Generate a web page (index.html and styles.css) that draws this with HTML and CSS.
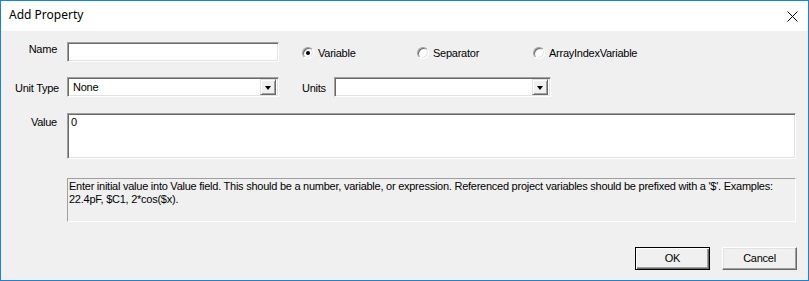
FILE: index.html
```html
<!DOCTYPE html>
<html>
<head>
<meta charset="utf-8">
<link rel="stylesheet" href="styles.css">
</head>
<body>
<div class="window">
  <div class="titlebar">
    <span class="title">Add Property</span>
    <svg class="close" width="11" height="11" viewBox="0 0 11 11"><path d="M0.5 0.5 L10.5 10.5 M10.5 0.5 L0.5 10.5" stroke="#000" stroke-width="1" fill="none"/></svg>
  </div>
  <div class="content">
    <div class="row row-name">
      <span class="lbl">Name</span>
      <div class="sunken field-name"></div>
      <div class="radios">
        <div class="radio-item"><span class="radio checked"><span class="dot"></span></span><span class="rtext">Variable</span></div>
        <div class="radio-item"><span class="radio"></span><span class="rtext">Separator</span></div>
        <div class="radio-item"><span class="radio"></span><span class="rtext">ArrayIndexVariable</span></div>
      </div>
    </div>
    <div class="row row-unit">
      <span class="lbl lbl-unit">Unit Type</span>
      <div class="sunken select select-unit"><span class="sel-text">None</span><span class="drop"><span class="tri"></span></span></div>
      <span class="lbl-units">Units</span>
      <div class="sunken select select-units"><span class="sel-text"></span><span class="drop"><span class="tri"></span></span></div>
    </div>
    <div class="row row-value">
      <span class="lbl lbl-value">Value</span>
      <div class="sunken textarea">0</div>
    </div>
    <div class="info">Enter initial value into Value field. This should be a number, variable, or expression. Referenced project variables should be prefixed with a '$'. Examples: 22.4pF, $C1, 2*cos($x).</div>
    <div class="buttons">
      <div class="btn btn-default"><span>OK</span></div>
      <div class="btn"><span>Cancel</span></div>
    </div>
  </div>
</div>
</body>
</html>
```
FILE: styles.css
```css
* { box-sizing: border-box; }
html, body { margin: 0; padding: 0; }
body {
  font-family: "Liberation Sans", Arial, sans-serif;
  font-size: 11px;
  line-height: 13px;
  letter-spacing: -0.25px;
  color: #000;
  background: #f0f0f0;
}
.window {
  width: 809px;
  height: 281px;
  border: 1px solid #1883d7;
  background: #f0f0f0;
  display: flex;
  flex-direction: column;
}
.titlebar {
  height: 30px;
  background: #fff;
  display: flex;
  align-items: center;
  justify-content: space-between;
  padding: 0 10px 2px 8px;
}
.title {
  font-family: "Noto Sans", "Open Sans", sans-serif;
  font-size: 12px;
  line-height: 16px;
  letter-spacing: 0;
  color: #000;
}
.close { display: block; margin-top: 2px; }
.content {
  flex: 1;
  padding-top: 11px;
  display: flex;
  flex-direction: column;
}
.row { display: flex; }
.lbl {
  width: 56px;
  margin-right: 10px;
  text-align: right;
}
.sunken {
  background: #fff;
  border: 1px solid;
  border-color: #a0a0a0 #fff #fff #a0a0a0;
  box-shadow: inset 1px 1px 0 #696969, inset -1px -1px 0 #e3e3e3;
}
.row-name { height: 20px; align-items: flex-start; }
.row-name .lbl { margin-top: 1px; }
.field-name { width: 212px; height: 20px; }
.radios {
  display: grid;
  grid-template-columns: 115px 116px auto;
  margin-left: 23px;
  height: 20px;
  align-items: center;
  padding-top: 2px;
}
.radio-item { display: flex; align-items: center; }
.radio {
  width: 12px;
  height: 12px;
  border-radius: 50%;
  background: #fff;
  border: 1px solid;
  border-color: #a0a0a0 #fff #fff #a0a0a0;
  box-shadow: inset 1px 1px 0 #696969, inset -1px -1px 0 #e3e3e3;
  display: flex;
  align-items: center;
  justify-content: center;
  margin-right: 4px;
}
.dot {
  width: 4px;
  height: 4px;
  border-radius: 50%;
  background: #000;
}
.row-unit { margin-top: 15px; height: 20px; align-items: center; }
.lbl-unit { width: 58px; margin-right: 8px; padding-top: 2px; }
.select {
  height: 20px;
  display: flex;
  align-items: center;
  justify-content: space-between;
  padding: 2px 2px 2px 5px;
}
.sel-text { padding-top: 1px; }
.select-unit { width: 212px; }
.select-units { width: 217px; }
.lbl-units { margin-left: 23px; width: 32px; padding-top: 2px; }
.drop {
  width: 16px;
  height: 16px;
  background: #f0f0f0;
  border: 1px solid;
  border-color: #e3e3e3 #696969 #696969 #e3e3e3;
  box-shadow: inset 1px 1px 0 #fff, inset -1px -1px 0 #a0a0a0;
  display: flex;
  align-items: center;
  justify-content: center;
}
.tri {
  width: 0;
  height: 0;
  border-left: 3.5px solid transparent;
  border-right: 3.5px solid transparent;
  border-top: 4px solid #000;
  margin-top: 1px;
}
.row-value { margin-top: 16px; align-items: flex-start; }
.lbl-value { margin-top: 3px; }
.textarea {
  width: 729px;
  height: 46px;
  padding: 2px 3px;
}
.info {
  margin-top: 19px;
  margin-left: 66px;
  width: 729px;
  height: 44px;
  border: 1px solid;
  border-color: #a0a0a0 #fff #fff #a0a0a0;
  padding: 1px 1px;
}
.buttons {
  margin-top: 25px;
  display: flex;
  justify-content: flex-end;
  gap: 12px;
  padding-right: 11px;
}
.btn {
  width: 75px;
  height: 23px;
  background: #f0f0f0;
  border: 1px solid;
  border-color: #fff #696969 #696969 #fff;
  box-shadow: inset -1px -1px 0 #a0a0a0, inset 1px 1px 0 #e3e3e3;
  display: flex;
  align-items: center;
  justify-content: center;
}
.btn-default {
  border: 1px solid #000;
  box-shadow: inset 1px 1px 0 #fff, inset -1px -1px 0 #696969, inset -2px -2px 0 #a0a0a0;
}
```
